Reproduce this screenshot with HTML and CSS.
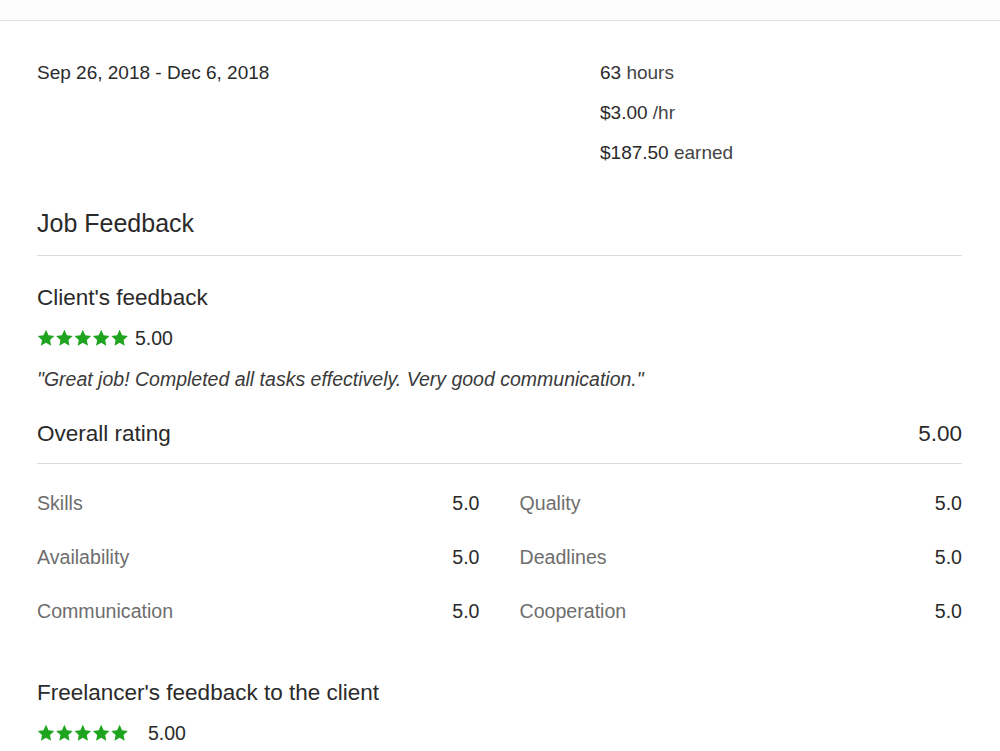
FILE: index.html
```html
<!DOCTYPE html>
<html>
<head>
    <title>Job details</title>
    <link rel="stylesheet" href="styles.css">
</head>
<body>
    <div class="top-bar"></div>

    <div class="job-details">
        <div class="job-summary">
            <div class="job-dates">Sep 26, 2018 - Dec 6, 2018</div>
            <div class="job-stats">
                <div class="stat">63 <span class="unit">hours</span></div>
                <div class="stat">$3.00 <span class="unit">/hr</span></div>
                <div class="stat">$187.50 <span class="unit">earned</span></div>
            </div>
        </div>

        <h2 class="section-title">Job Feedback</h2>

        <h3 class="feedback-title">Client's feedback</h3>
        <div class="rating">
            <svg class="stars" width="92" height="18" viewBox="0 0 92 18">
                <defs>
                    <path id="star" d="M9 0.8l2.5 5.4 5.8 0.7-4.3 4 1.1 5.8L9 13.8l-5.1 2.9 1.1-5.8-4.3-4 5.8-0.7z"/>
                </defs>
                <use href="#star" x="0"/>
                <use href="#star" x="18.4"/>
                <use href="#star" x="36.8"/>
                <use href="#star" x="55.2"/>
                <use href="#star" x="73.6"/>
            </svg>
            <span class="score">5.00</span>
        </div>
        <p class="comment">"Great job! Completed all tasks effectively. Very good communication."</p>

        <div class="overall">
            <span>Overall rating</span>
            <span>5.00</span>
        </div>

        <div class="scores">
            <div class="score-row"><span class="label">Skills</span><span class="value">5.0</span></div>
            <div class="score-row"><span class="label">Quality</span><span class="value">5.0</span></div>
            <div class="score-row"><span class="label">Availability</span><span class="value">5.0</span></div>
            <div class="score-row"><span class="label">Deadlines</span><span class="value">5.0</span></div>
            <div class="score-row"><span class="label">Communication</span><span class="value">5.0</span></div>
            <div class="score-row"><span class="label">Cooperation</span><span class="value">5.0</span></div>
        </div>

        <h3 class="feedback-title freelancer">Freelancer's feedback to the client</h3>
        <div class="rating wide">
            <svg class="stars" width="92" height="18" viewBox="0 0 92 18">
                <use href="#star" x="0"/>
                <use href="#star" x="18.4"/>
                <use href="#star" x="36.8"/>
                <use href="#star" x="55.2"/>
                <use href="#star" x="73.6"/>
            </svg>
            <span class="score">5.00</span>
        </div>
    </div>
</body>
</html>
```

FILE: styles.css
```css
body {
    margin: 0;
    font-family: 'Liberation Sans', Arial, sans-serif;
    color: #2a2a2a;
    background-color: #fff;
}

/* top header strip */
.top-bar {
    height: 20px;
    background-color: #fcfcfc;
    border-bottom: 1px solid #e2e2e2;
}

.job-details {
    padding: 32px 38px 0 37px;
}

/* dates + stats */
.job-summary {
    display: grid;
    grid-template-columns: 563px 1fr;
    font-size: 19px;
    line-height: 40px;
}

.unit {
    color: #444;
}

.section-title {
    margin: 35px 0 0;
    padding-bottom: 17px;
    border-bottom: 1px solid #dcdcdc;
    font-size: 25px;
    line-height: 30px;
    font-weight: normal;
}

.feedback-title {
    margin: 28px 0 0;
    font-size: 22.5px;
    line-height: 28px;
    font-weight: normal;
}

.feedback-title.freelancer {
    margin-top: 56px;
}

.rating {
    display: flex;
    align-items: center;
    gap: 6px;
    margin-top: 12px;
    height: 28px;
    font-size: 19.5px;
}

.rating.wide {
    gap: 19px;
}

.stars {
    fill: #1ea41e;
}

.comment {
    margin: 14px 0 0;
    font-size: 19.5px;
    line-height: 26px;
    font-style: italic;
    color: #3a3a3a;
}

.overall {
    display: flex;
    justify-content: space-between;
    margin-top: 28px;
    padding-bottom: 15px;
    border-bottom: 1px solid #dcdcdc;
    font-size: 22.5px;
    line-height: 28px;
}

/* detailed scores */
.scores {
    display: grid;
    grid-template-columns: 1fr 1fr;
    column-gap: 40px;
    row-gap: 30px;
    margin-top: 27px;
    font-size: 19.6px;
    line-height: 24px;
}

.score-row {
    display: flex;
    justify-content: space-between;
}

.label {
    color: #6e6e6e;
}

.value {
    color: #2a2a2a;
}
```
